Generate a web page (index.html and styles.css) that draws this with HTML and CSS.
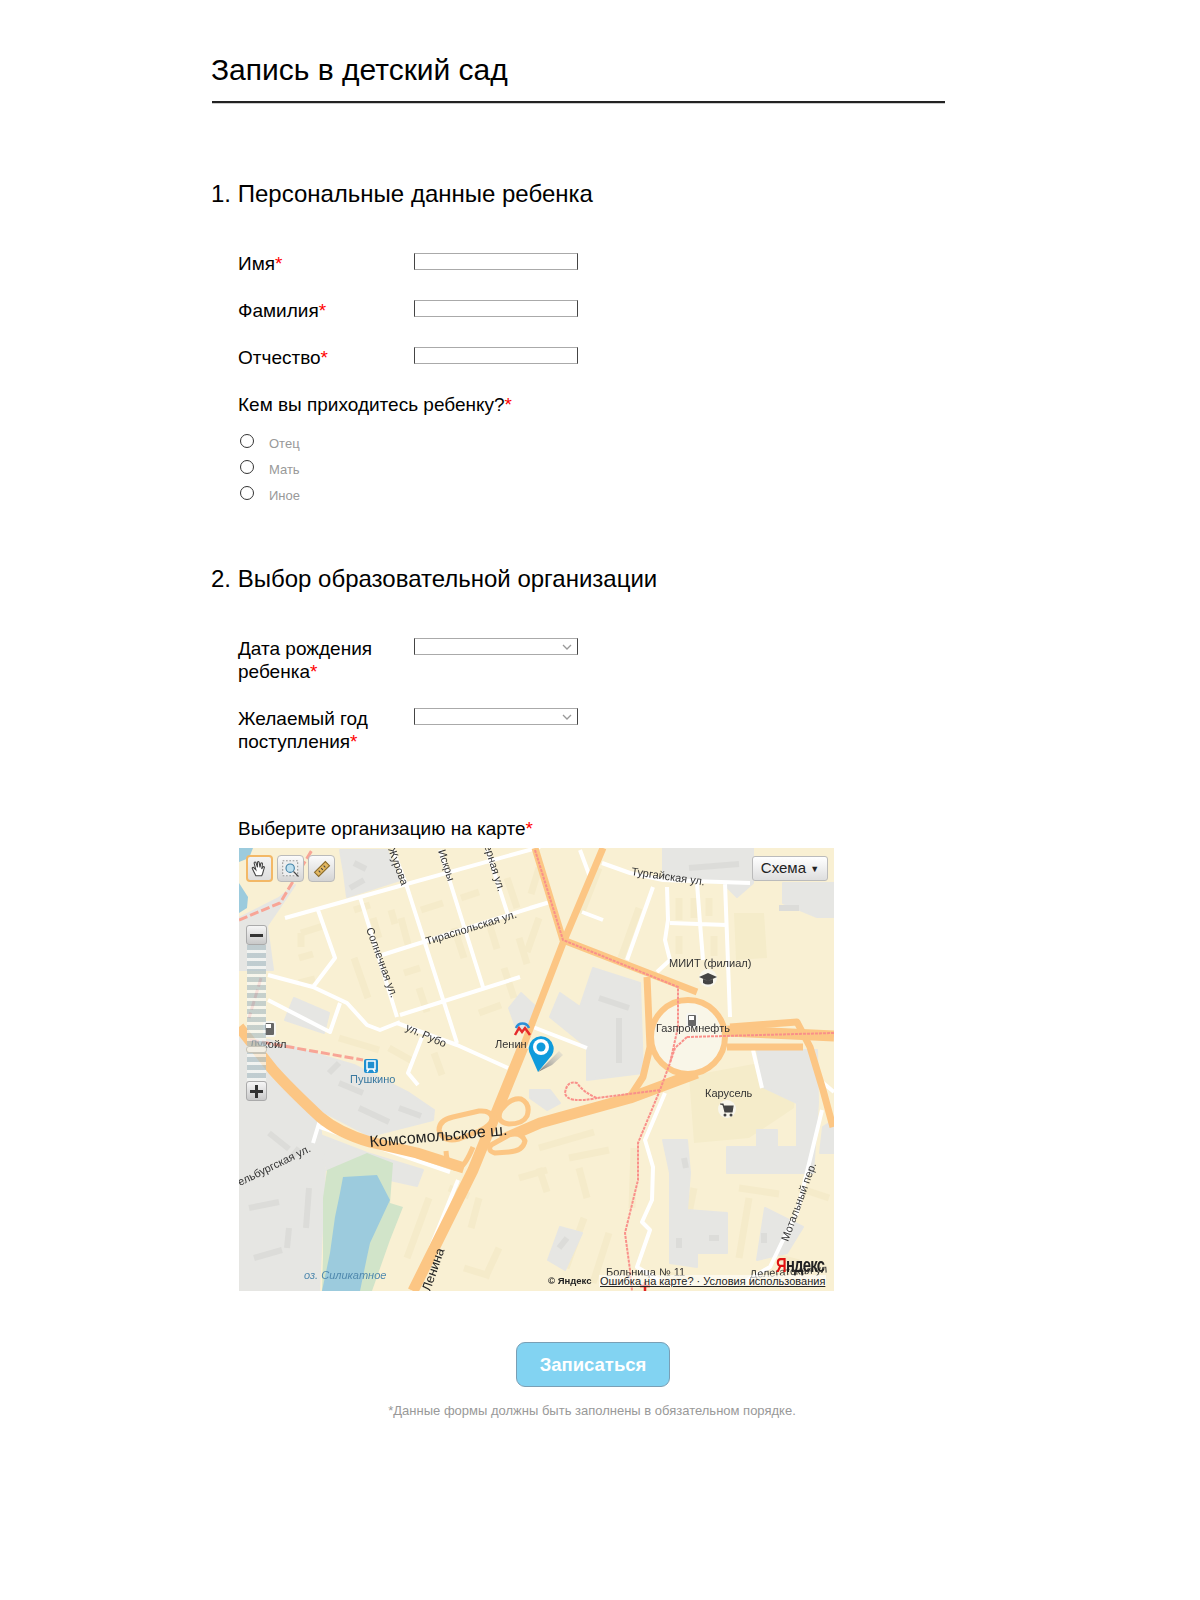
FILE: index.html
```html
<!DOCTYPE html>
<html lang="ru">
<head>
  <meta charset="UTF-8">
  <meta name="viewport" content="width=device-width, initial-scale=1.0">
  <title>Запись в детский сад</title>
  <link rel="stylesheet" href="styles.css">
</head>
<body>
  <main class="page">
    <h1 class="page-title">Запись в детский сад</h1>

    <form class="enroll-form">
      <h2 class="section-title section-first">1. Персональные данные ребенка</h2>
      <div class="section-body">
        <div class="form-row">
          <label class="field-label" for="first-name">Имя<span class="req">*</span></label>
          <input class="text-field" type="text" id="first-name">
        </div>
        <div class="form-row">
          <label class="field-label" for="last-name">Фамилия<span class="req">*</span></label>
          <input class="text-field" type="text" id="last-name">
        </div>
        <div class="form-row">
          <label class="field-label" for="patronymic">Отчество<span class="req">*</span></label>
          <input class="text-field" type="text" id="patronymic">
        </div>

        <p class="question">Кем вы приходитесь ребенку?<span class="req">*</span></p>
        <div class="radio-group">
          <label class="radio-row"><input type="radio" name="relation"><span>Отец</span></label>
          <label class="radio-row"><input type="radio" name="relation"><span>Мать</span></label>
          <label class="radio-row"><input type="radio" name="relation"><span>Иное</span></label>
        </div>
      </div>

      <h2 class="section-title section-second">2. Выбор образовательной организации</h2>
      <div class="section-body">
        <div class="form-row form-row-tall">
          <label class="field-label" for="birth-date">Дата рождения ребенка<span class="req">*</span></label>
          <div class="select-box">
            <select class="select-field" id="birth-date"></select>
            <svg class="chevron" viewBox="0 0 10 6"><path d="M1 1l4 4 4-4"/></svg>
          </div>
        </div>
        <div class="form-row form-row-tall">
          <label class="field-label" for="entry-year">Желаемый год поступления<span class="req">*</span></label>
          <div class="select-box">
            <select class="select-field" id="entry-year"></select>
            <svg class="chevron" viewBox="0 0 10 6"><path d="M1 1l4 4 4-4"/></svg>
          </div>
        </div>

        <p class="map-caption">Выберите организацию на карте<span class="req">*</span></p>

        <div class="map">
          <svg class="map-canvas" viewBox="0 0 595 443" width="595" height="443">
            <rect class="land" width="595" height="443"/>

            <!-- residential blocks -->
            <path class="block" d="M62 85l22-7M62 85v14M115 62l16-5M140 90l-6-20M152 62l4 14M170 100l-8-30M182 62l22-7M222 50l18-6M268 30l10 30M215 80l10 30M250 75l8 26M165 125l16-5M180 140l8 24M115 110l14 40M60 110l14-4M60 135l16-4M100 190l40 12M150 200l25 14M195 205l8 22M240 165l22-8M265 120l10 30M280 90l8 26M300 70l-12 34M300 20l-8 26M400 60l-18 50M360 20l-18 46M455 50v20M470 50v18M440 50v22M440 88v18M475 88v20M190 350l-22 60M210 340l20 8M240 350l-8 30M280 330l28-8M260 400l-14 30M225 420l26 8M300 300l55-16M330 310l40-8M300 320l8 24M340 320l8 30M345 370l-18 50M395 300l-2 60M370 385l-16 50M455 340l-6 30M500 340l40 6M510 350l-10 60M540 410l20 5M420 425l40 8M560 340l30 10"/>
            <polygon class="block-soft" points="495,65 525,65 528,110 497,112"/>
            <polygon class="block-soft" points="450,228 520,215 558,232 555,260 510,290 455,295"/>

            <!-- industrial areas -->
            <polygon class="gray" points="101,2 148,2 161,32 108,49 105,25"/>
            <polygon class="gray" points="56,37 28,78 34,122 0,122 0,70 40,50"/>
            <polygon class="gray" points="0,190 30,192 115,217 170,245 195,262 194,272 131,288 81,262 34,222 0,190"/>
            <polygon class="gray" points="0,190 34,232 81,275 86,322 80,443 0,443"/>
            <polygon class="gray" points="81,287 128,305 184,322 178,338 151,332 128,305 88,322"/>
            <polygon class="gray" points="354,120 401,135 404,225 348,232 348,199 311,169 321,145 341,159"/>
            <polygon class="gray" points="291,242 311,242 321,255 308,262 291,250"/>
            <polygon class="gray" points="424,0 514,0 514,35 498,49 484,35 424,29"/>
            <polygon class="gray" points="544,35 595,35 595,69 578,69 544,55"/>
            <polygon class="gray" points="518,202 578,202 579,255 574,325 488,325 488,299 518,299 518,282 538,282 538,299 558,299 558,255 524,239"/>
            <polygon class="gray" points="584,279 595,272 595,305 581,305"/>
            <polygon class="gray" points="424,292 448,292 451,325 448,362 488,365 488,405 458,405 458,419 431,415 431,325"/>
            <polygon class="gray" points="321,379 343,385 326,422 309,412"/>
            <polygon class="gray" points="526,360 564,379 548,405 518,412"/>
            <polygon class="gray" points="282,145 300,162 292,178 278,182 270,160"/>
            <polygon class="gray" points="55,150 90,165 85,185 46,172"/>
            <path class="gray-dark" d="M115 15l12 6M125 32l-14 8M10 360l30-6M15 410l28-8M30 285l20 16M60 300l-8 10M70 340l-3 40M50 380l-2 20M100 235l24 10M120 260l30 14M90 225l10-10M160 260l22 8M360 150l30 10M380 170v45M445 310l2 10M470 390h10M440 390v10M525 385v10M320 400l8-10M540 60h20M450 20l50-4"/>

            <!-- water and park -->
            <polygon class="park" points="88,322 128,305 154,315 151,355 164,359 151,392 133,443 83,443 84,410 84,350"/>
            <polygon class="lake" points="104,329 138,327 151,352 131,395 128,409 121,443 83,443 91,405 96,369 101,345"/>
            <polygon class="lake" points="0,35 9,49 8,60 0,65"/>
            <polygon class="lake" points="0,0 14,0 10,10 0,14"/>

            <!-- streets -->
            <path class="road" d="M46 70L121 49 301 -1M154 2L168 39 218 195M121 49L158 169M201 2L244 139M248 2L269 67M143 107L301 57M161 167L281 129M79 62L96 110 74 139M29 127L74 139 108 155 128 177 141 182 161 174M29 152L91 184 101 155M158 175L218 197 269 220M183 189L169 225 179 237M363 15L391 25 424 32 511 35M414 39L388 112M428 39L429 72 426 92 431 112 418 124M458 35L461 75 464 112M486 35L489 115 491 169M431 75L488 77M341 2L351 29M291 60L311 54M343 64L364 72M294 179L348 200M514 202L523 240M426 245L406 292 414 319 413 352 403 374 411 382 398 419 420 432M583 262L558 365 544 392 531 419 508 432M583 234L595 244M81 279L211 324M81 272L74 295M219 332L174 443"/>

            <!-- highways -->
            <path class="highway-wide" d="M0 179L34 222Q50 240 81 269Q100 285 131 294L178 305 225 320"/>
            <path class="highway-wide" d="M174 443L234 322 284 199"/>
            <path class="highway-wide" d="M262 292L301 275 391 250 458 225"/>
            <path class="highway" d="M284 199L324 95 364 0M296 0L324 92 458 144M408 129L411 199 404 229 391 249M491 179L558 174 571 199 584 242 594 279M488 199L564 199"/>
            <path class="highway-wide" d="M488 183L595 188"/>
            <path class="ramp" d="M200 282Q200 272 214 269L240 263Q252 262 253 270 253 277 240 283L220 291Q204 295 200 282ZM262 262Q272 249 282 251 292 256 288 268 284 276 270 276 256 274 262 262ZM252 297L270 287Q282 283 286 293 284 303 270 304L256 305Q248 303 252 297Z"/>
            <path class="ramp-open" d="M207 303Q208 322 220 320 226 318 234 299"/>
            <circle class="roundabout" cx="449" cy="189" r="37"/>

            <!-- rail lines -->
            <path class="rail-line" d="M0 72L41 55 73 2M11 192L124 212M22 130L10 170"/>
            <path class="tram" d="M296 2L324 92 439 139 439 179 431 215 421 242 399 295 399 332 386 385 391 422 393 443M421 242L358 250Q345 245 338 235 328 232 326 245 328 256 358 250M448 189L595 185M448 189L436 200 431 215"/>

            <!-- map pictograms -->
            <rect class="bus-stop" x="125" y="211" width="14" height="14" rx="2"/>
            <path class="bus-stop-glyph" d="M128 213h8v8h-8zM130 221l-2 3M134 221l2 3"/>
            <rect class="poi-gas" x="25" y="174" width="11" height="14" rx="2"/>
            <rect class="poi-glyph" x="27" y="176" width="5" height="4"/>
            <circle class="poi-back" cx="469" cy="130" r="9"/>
            <path class="poi-dark" d="M469 125l9 4-9 4-9-4zM464 131v4q5 3 10 0v-4l-5 2z"/>
            <rect class="poi-gas" x="448" y="166" width="10" height="13" rx="2"/>
            <rect class="poi-glyph" x="450" y="168" width="5" height="4"/>
            <circle class="poi-back" cx="488" cy="261" r="9"/>
            <path class="poi-cart" d="M481 256h3l2 8h7l1-6h-9"/>
            <circle class="poi-dark" cx="486" cy="267" r="1.5"/>
            <circle class="poi-dark" cx="492" cy="267" r="1.5"/>
            <path class="metro-arc" d="M277 180a7 7 0 0 1 13 0"/>
            <path class="metro-m" d="M276 187l4-7 3 4 3-4 5 7"/>
            <path class="hospital" d="M406 434v9M401 438h10"/>

            <!-- map labels -->
            <text class="map-label" transform="translate(149 1) rotate(70)">Журова</text>
            <text class="map-label" transform="translate(199 3) rotate(72)">Искры</text>
            <text class="map-label" transform="translate(243 -9) rotate(73)">Черная ул.</text>
            <text class="map-label" transform="translate(127 81) rotate(70)">Солнечная ул.</text>
            <text class="map-label" transform="translate(188 97) rotate(-17)">Тираспольская ул.</text>
            <text class="map-label" transform="translate(166 182) rotate(24)">ул. Рубо</text>
            <text class="map-label" x="256" y="200">Ленин</text>
            <text class="map-label" transform="translate(392 27) rotate(8)">Тургайская ул.</text>
            <text class="map-label" x="430" y="119">МИИТ (филиал)</text>
            <text class="map-label" x="417" y="184">Газпромнефть</text>
            <text class="map-label" x="466" y="249">Карусель</text>
            <text class="map-label map-label-city" x="111" y="235">Пушкино</text>
            <text class="map-label" x="11" y="200">Лукойл</text>
            <text class="map-label map-label-road" transform="translate(131 299) rotate(-5)">Комсомольское ш.</text>
            <text class="map-label" transform="translate(1 338) rotate(-26)">ельбургская ул.</text>
            <text class="map-label map-label-water" x="65" y="431">оз. Силикатное</text>
            <text class="map-label map-label-street" transform="translate(191 444) rotate(-71)">Ленина</text>
            <text class="map-label" transform="translate(549 394) rotate(-70)">Мотальный пер.</text>
            <text class="map-label" x="367" y="428">Больница № 11</text>
            <text class="map-label" transform="translate(511 430) rotate(-4)">Делегатская ул</text>
            <text class="map-label map-label-copy" x="309" y="436">© Яндекс</text>
            <text class="map-logo" transform="translate(537 424) scale(0.74 1)"><tspan class="map-logo-red">Я</tspan>ндекс</text>
          </svg>

          <a class="map-links">Ошибка на карте? · Условия использования</a>

          <div class="map-tools">
            <button class="map-tool map-tool-active" type="button">
              <svg viewBox="0 0 24 24"><path d="M7 20L3 12q-1-2 1-2l3 3-2-8q0-2 2-1l2 6V4q1-2 2 0l1 6 1-5q2-1 2 1l-1 6 2-3q2 0 1 2l-2 7-1 2z"/></svg>
            </button>
            <button class="map-tool" type="button">
              <svg viewBox="0 0 24 24"><rect class="tool-dash" x="2" y="2" width="18" height="18"/><circle class="tool-lens" cx="11" cy="11" r="5"/><path d="M15 15l6 6"/></svg>
            </button>
            <button class="map-tool" type="button">
              <svg viewBox="0 0 24 24"><path class="tool-ruler" d="M3 16L16 3l5 5L8 21z"/><path d="M8 14l2 2M11 11l2 2M14 8l2 2"/></svg>
            </button>
          </div>

          <div class="zoom-control">
            <div class="zoom-btn"><span class="zoom-sign"></span></div>
            <div class="zoom-track"><div class="zoom-thumb"></div></div>
            <div class="zoom-btn"><span class="zoom-sign zoom-sign-plus"></span></div>
          </div>

          <button class="map-type" type="button">Схема <span class="map-type-arrow">▼</span></button>

          <svg class="map-pin" viewBox="0 0 48 40" width="48" height="40">
            <defs>
              <linearGradient id="pin-fade" x1="0" y1="1" x2="1" y2="0">
                <stop class="pin-fade-start" offset="0"/>
                <stop class="pin-fade-end" offset="1"/>
              </linearGradient>
            </defs>
            <path d="M10 38L31 17l4 4-11 10z" fill="url(#pin-fade)"/>
            <path class="pin-body" d="M10 38L3 22a12.500 12.500 0 1 1 21-1z"/>
            <circle class="pin-hole" cx="13" cy="13" r="8"/>
            <circle class="pin-dot" cx="13" cy="13" r="4.500"/>
          </svg>
        </div>

        <div class="form-footer">
          <button class="submit-btn" type="submit">Записаться</button>
          <p class="form-note">*Данные формы должны быть заполнены в обязательном порядке.</p>
        </div>
      </div>
    </form>
  </main>
</body>
</html>
```

FILE: styles.css
```css
body {
  margin: 0;
  background: #fff;
  color: #000;
  font-family: "Liberation Sans", Arial, sans-serif;
}

.page {
  width: 733px;
  margin-left: 212px;
  padding-top: 53px;
  padding-bottom: 150px;
}

.page-title {
  margin: 0;
  padding-bottom: 14px;
  font-size: 30px;
  line-height: 34px;
  font-weight: normal;
  text-indent: -1px;
  border-bottom: 2px solid #222;
  box-shadow: 0 1px 0 #ccc;
}

.section-title {
  margin: 0;
  font-size: 24px;
  line-height: 28px;
  font-weight: normal;
  text-indent: -1px;
}

.section-first {
  margin-top: 77px;
}

.section-second {
  margin-top: 53px;
}

.section-body {
  width: 710px;
  margin-left: 26px;
  padding-top: 44px;
}

.form-row {
  display: flex;
  align-items: flex-start;
  margin-bottom: 24px;
  height: 23px;
}

.form-row-tall {
  height: 46px;
}

.field-label {
  flex: 0 0 176px;
  font-size: 19px;
  line-height: 23px;
}

.req {
  color: #f00;
}

.text-field,
.select-field {
  display: block;
  box-sizing: border-box;
  width: 164px;
  height: 17px;
  margin: 1px 0 0;
  padding: 0;
  background: #fff;
  border-style: solid;
  border-width: 1px;
  border-color: #aaa #444;
  border-radius: 0;
  appearance: none;
}

.select-box {
  position: relative;
}

.chevron {
  position: absolute;
  top: 7px;
  right: 6px;
  width: 10px;
  height: 6px;
  fill: none;
  stroke: #999;
  stroke-width: 1.300;
}

.question,
.map-caption {
  margin: 0;
  font-size: 19px;
  line-height: 23px;
}

.question {
  margin-top: 1px;
}

.radio-group {
  display: flex;
  flex-direction: column;
  margin-top: 18px;
}

.radio-row {
  display: flex;
  align-items: flex-start;
  height: 26px;
  font-size: 13px;
  line-height: 16px;
  color: #999;
}

.radio-row input {
  box-sizing: border-box;
  width: 14px;
  height: 14px;
  margin: 0 15px 0 2px;
  background: #fff;
  border: 1px solid #333;
  border-radius: 50%;
  appearance: none;
}

.radio-row span {
  padding-top: 2px;
}

.map-caption {
  margin-top: 64px;
}

.map {
  position: relative;
  width: 595px;
  height: 443px;
  margin: 8px 0 0 1px;
  overflow: hidden;
}

.map-canvas {
  display: block;
  filter: blur(0.4px);
}

.land { fill: #f9f0d3; }
.block { fill: none; stroke: #f5ebca; stroke-width: 7; }
.block-soft { fill: #f5ecca; }
.gray { fill: #e6e6e3; stroke: #e6e6e3; stroke-width: 2; stroke-linejoin: round; }
.gray-dark { fill: none; stroke: #dcdcd9; stroke-width: 6; }
.park { fill: #d1e4c9; }
.lake { fill: #9ccbdd; }
.road { fill: none; stroke: #fff; stroke-width: 4; stroke-linejoin: round; }
.highway-wide { fill: none; stroke: #fcc684; stroke-width: 11; stroke-linejoin: round; }
.highway { fill: none; stroke: #fcc684; stroke-width: 7; stroke-linejoin: round; }
.ramp { fill: #f9f0d3; stroke: #fcc684; stroke-width: 5; stroke-linejoin: round; }
.ramp-open { fill: none; stroke: #fcc684; stroke-width: 5; }
.roundabout { fill: #f9f6e8; stroke: #fcc684; stroke-width: 6; }
.rail-line { fill: none; stroke: #f8a596; stroke-width: 3; stroke-dasharray: 9 3; }
.tram { fill: none; stroke: #f9908a; stroke-width: 2; stroke-dasharray: 3 1; stroke-linejoin: round; }
.bus-stop { fill: #1f8fd0; }
.bus-stop-glyph { fill: none; stroke: #fff; stroke-width: 1.500; }
.poi-gas { fill: #666; stroke: #f6f6f2; stroke-width: 2; }
.poi-glyph { fill: #fff; }
.poi-back { fill: #f8f6ec; }
.poi-dark { fill: #444; }
.poi-cart { fill: #444; stroke: #444; stroke-width: 1.200; }
.metro-arc { fill: none; stroke: #2b8fd6; stroke-width: 2.500; }
.metro-m { fill: none; stroke: #e52b2b; stroke-width: 2.500; }
.hospital { fill: none; stroke: #e02020; stroke-width: 2.500; }

.map-label {
  fill: #333;
  font-size: 11px;
}

.map-label-city { fill: #39789f; }
.map-label-water { fill: #5089ae; font-style: italic; }
.map-label-road { fill: #222; font-size: 16px; }
.map-label-street { fill: #222; font-size: 13px; }
.map-label-copy { fill: #222; font-size: 9.500px; font-weight: bold; }

.map-logo {
  fill: #222;
  font-size: 20px;
  font-weight: bold;
  letter-spacing: -1px;
}

.map-logo-red { fill: #e01010; }

.map-links {
  position: absolute;
  left: 360px;
  bottom: 4px;
  padding: 0 1px;
  background: rgba(255, 255, 255, 0.6);
  color: #222;
  font-size: 11px;
  line-height: 12px;
  text-decoration: underline;
  white-space: nowrap;
}

.map-tools {
  position: absolute;
  top: 7px;
  left: 7px;
  display: flex;
  gap: 4px;
}

.map-tool {
  display: flex;
  align-items: center;
  justify-content: center;
  width: 27px;
  height: 27px;
  padding: 0;
  background: linear-gradient(#fbfbfb, #d4d4d4);
  border: 1px solid #bbb;
  border-radius: 4px;
}

.map-tool-active {
  border: 2px solid #f3b866;
  background: linear-gradient(#f3f3f3, #dedede);
}

.map-tool svg {
  width: 20px;
  height: 20px;
  fill: #fff;
  stroke: #444;
  stroke-width: 1.300;
}

.map-tool .tool-dash {
  fill: #eee;
  stroke: #999;
  stroke-dasharray: 2 2;
}

.map-tool .tool-lens {
  fill: #bfe0ef;
  stroke: #3d7fa5;
}

.map-tool .tool-ruler {
  fill: #e2b760;
  stroke: #8a6a2a;
}

.zoom-control {
  position: absolute;
  top: 77px;
  left: 7px;
  display: flex;
  flex-direction: column;
  width: 21px;
}

.zoom-btn {
  display: flex;
  flex: 0 0 20px;
  align-items: center;
  justify-content: center;
  background: linear-gradient(#f6f6f6, #c9c9c9);
  border: 1px solid #aaa;
  border-radius: 3px;
  box-sizing: border-box;
}

.zoom-sign {
  position: relative;
  display: block;
  width: 13px;
  height: 3px;
  background: #333;
}

.zoom-sign-plus::after {
  content: "";
  position: absolute;
  top: -5px;
  left: 5px;
  width: 3px;
  height: 13px;
  background: #333;
}

.zoom-track {
  position: relative;
  height: 136px;
  margin: 0 1px;
  background: repeating-linear-gradient(rgba(176, 194, 200, 0.7) 0, rgba(176, 194, 200, 0.7) 5px, rgba(246, 248, 246, 0.7) 5px, rgba(246, 248, 246, 0.7) 8px);
}

.zoom-thumb {
  position: absolute;
  top: 101px;
  left: -1px;
  width: 21px;
  height: 7px;
  background: #f3efe4;
  border: 1px solid #c8c4b8;
  border-radius: 3px;
  box-sizing: border-box;
}

.map-type {
  position: absolute;
  top: 8px;
  right: 6px;
  width: 76px;
  height: 25px;
  padding: 0;
  background: linear-gradient(#fff, #dedede);
  border: 1px solid #bbb;
  border-radius: 3px;
  color: #222;
  font-family: inherit;
  font-size: 15px;
  line-height: 21px;
}

.map-type-arrow {
  font-size: 9px;
  vertical-align: 1px;
}

.map-pin {
  position: absolute;
  top: 186px;
  left: 289px;
}

.pin-fade-start { stop-color: #777; }
.pin-fade-end { stop-color: #ccc; stop-opacity: 0.3; }
.pin-body { fill: #0f9bdc; }
.pin-hole { fill: #fff; }
.pin-dot { fill: #0f9bdc; }

.form-footer {
  display: flex;
  flex-direction: column;
  align-items: center;
  margin-top: 51px;
}

.submit-btn {
  box-sizing: border-box;
  width: 154px;
  height: 45px;
  padding: 0;
  background: #82d3f2;
  border: 1px solid #7a9fb5;
  border-radius: 9px;
  color: #fff;
  font-family: inherit;
  font-size: 18.500px;
  font-weight: bold;
}

.form-note {
  margin: 16px 2px 0 0;
  color: #999;
  font-size: 13px;
  line-height: 16px;
}
```
